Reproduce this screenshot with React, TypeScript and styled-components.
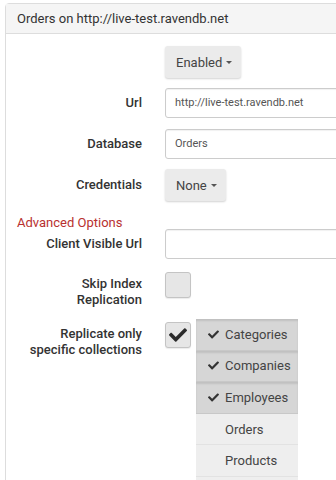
import React from "react";
import styled, { createGlobalStyle } from "styled-components";
import { FaCheck } from "react-icons/fa";

const Global = createGlobalStyle`
  html, body { margin: 0; padding: 0; background: #fff; overflow: hidden; }
  body { font-family: Roboto, "Liberation Sans", sans-serif; color: #333; }
`;

const Page = styled.div`
  padding: 3px 0 0 5px;
  width: 420px;
  height: 477px;
  overflow: hidden;
`;

const Panel = styled.div`
  border: 1px solid #ddd;
  border-radius: 4px 4px 0 0;
  height: 600px;
`;

const Header = styled.div`
  background: #f5f5f5;
  border-bottom: 1px solid #ddd;
  height: 29px;
  padding: 0 11px;
  font-size: 13px;
  line-height: 30px;
  color: #333;
`;

const Body = styled.div`
  padding: 12px 0 0 11px;
  display: flex;
  flex-direction: column;
`;

const Row = styled.div<{ $mb: number }>`
  display: grid;
  grid-template-columns: 125px 1fr;
  column-gap: 23px;
  margin-bottom: ${(p) => p.$mb}px;
  align-items: start;
`;

const Label = styled.div<{ $pt: number }>`
  text-align: right;
  font-size: 13px;
  font-weight: 500;
  line-height: 16px;
  color: #333;
  padding-top: ${(p) => p.$pt}px;
`;

const DropButton = styled.button`
  justify-self: start;
  height: 32px;
  padding: 0 9px 0 11px;
  border: none;
  border-radius: 3px;
  background: #ebebeb;
  box-shadow: 0 1px 2px rgba(0, 0, 0, 0.18);
  font-family: Roboto, "Liberation Sans", sans-serif;
  font-size: 13px;
  color: #444;
  display: flex;
  align-items: center;
  gap: 4px;
`;

const Caret = styled.span`
  width: 0;
  height: 0;
  border-left: 3px solid transparent;
  border-right: 3px solid transparent;
  border-top: 3px solid #555;
  margin-top: 1px;
`;

const Input = styled.div`
  height: 28px;
  border: 1px solid #ccc;
  border-radius: 3px;
  box-shadow: inset 0 1px 1px rgba(0, 0, 0, 0.06);
  padding: 0 9px;
  font-size: 11px;
  line-height: 28px;
  color: #555;
`;

const SectionTitle = styled.div`
  font-size: 13px;
  line-height: 17px;
  color: #b8312f;
  margin-top: 2px;
  margin-bottom: -2px;
`;

const CheckBox = styled.div`
  width: 24px;
  height: 24px;
  border: 1px solid #c4c4c4;
  border-radius: 3px;
  background: #e6e6e6;
  box-shadow: 0 1px 1px rgba(0, 0, 0, 0.08);
  display: flex;
  align-items: center;
  justify-content: center;
  color: #2b2b2b;
`;

const ControlLine = styled.div`
  display: flex;
  align-items: flex-start;
  gap: 5px;
`;

const CheckWrap = styled.div`
  margin-top: 3px;
`;

const List = styled.div`
  width: 102px;
  display: flex;
  flex-direction: column;
`;

const Item = styled.div<{ $sel: boolean }>`
  height: 30.6px;
  flex-shrink: 0;
  border-bottom: 1px solid ${(p) => (p.$sel ? "#c8c8c8" : "#e2e2e2")};
  background: ${(p) => (p.$sel ? "#d6d6d6" : "#eeeeee")};
  box-shadow: ${(p) => (p.$sel ? "inset 0 2px 2px rgba(0,0,0,0.1)" : "none")};
  display: flex;
  align-items: center;
  padding-left: 12px;
  gap: 6px;
  font-size: 13px;
  color: #444;
`;

const ItemCheck = styled.span`
  width: 11px;
  display: flex;
  color: #333;
`;

const collections: [string, boolean][] = [
  ["Categories", true],
  ["Companies", true],
  ["Employees", true],
  ["Orders", false],
  ["Products", false],
  ["Regions", false],
];

export default function App() {
  return (
    <>
      <Global />
      <Page>
        <Panel>
          <Header>Orders on http://live-test.ravendb.net</Header>
          <Body>
            <Row $mb={10}>
              <Label $pt={0} />
              <DropButton>
                Enabled <Caret />
              </DropButton>
            </Row>
            <Row $mb={11}>
              <Label $pt={7}>Url</Label>
              <Input>http://live-test.ravendb.net</Input>
            </Row>
            <Row $mb={10}>
              <Label $pt={7}>Database</Label>
              <Input>Orders</Input>
            </Row>
            <Row $mb={11}>
              <Label $pt={8}>Credentials</Label>
              <DropButton>
                None <Caret />
              </DropButton>
            </Row>
            <SectionTitle>Advanced Options</SectionTitle>
            <Row $mb={13}>
              <Label $pt={7}>Client Visible Url</Label>
              <Input />
            </Row>
            <Row $mb={11}>
              <Label $pt={4}>
                Skip Index
                <br />
                Replication
              </Label>
              <CheckBox />
            </Row>
            <Row $mb={0}>
              <Label $pt={7}>
                Replicate only
                <br />
                specific collections
              </Label>
              <ControlLine>
                <CheckWrap>
                  <CheckBox>
                    <FaCheck size={18} />
                  </CheckBox>
                </CheckWrap>
                <List>
                  {collections.map(([name, sel]) => (
                    <Item key={name} $sel={sel}>
                      <ItemCheck>{sel && <FaCheck size={11} />}</ItemCheck>
                      {name}
                    </Item>
                  ))}
                </List>
              </ControlLine>
            </Row>
          </Body>
        </Panel>
      </Page>
    </>
  );
}
